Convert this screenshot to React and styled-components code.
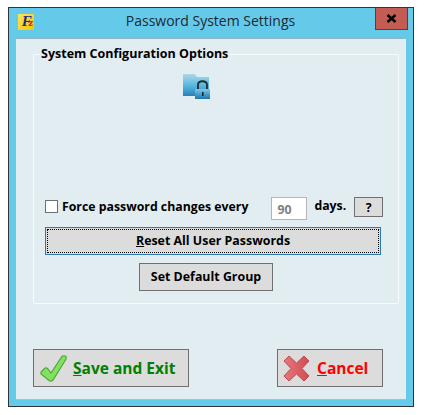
import React from 'react';
import styled, { createGlobalStyle } from 'styled-components';

const Global = createGlobalStyle`
    html, body {
        margin: 0;
        padding: 0;
        background: #ffffff;
    }
    body {
        font-family: "Open Sans", "Liberation Sans", sans-serif;
        color: #000000;
    }
`;

const Page = styled.div`
    width: 425px;
    height: 415px;
    padding: 7px 0 0 8px;
    box-sizing: border-box;
`;

const Window = styled.div`
    width: 406px;
    height: 400px;
    box-sizing: border-box;
    border: 1px solid #303438;
    background: #65c9ea;
    padding: 0 7px 6px 7px;
    display: flex;
    flex-direction: column;
`;

const TitleBar = styled.div`
    height: 30px;
    flex: none;
    display: flex;
    align-items: flex-start;
`;

const AppIcon = styled.div`
    width: 16px;
    height: 16px;
    margin: 6px 0 0 2px;
    flex: none;
    background: linear-gradient(135deg, #ffe45a, #f4c400);
    font-family: "Liberation Serif", serif;
    font-style: italic;
    font-weight: bold;
    font-size: 15px;
    line-height: 14px;
    color: #1d2c86;
    text-align: center;
    letter-spacing: -3px;

    span {
        color: #b3243a;
        font-size: 11px;
    }
`;

const Title = styled.div`
    flex: 1;
    text-align: center;
    font-size: 14px;
    line-height: 20px;
    margin-top: 3px;
    padding-left: 12px;
    color: #1c2a33;
`;

const CloseButton = styled.div`
    width: 33px;
    height: 22px;
    flex: none;
    margin-right: -2px;
    box-sizing: border-box;
    background: #c35c52;
    border: 1px solid #54403e;
    border-top: none;
    display: flex;
    align-items: center;
    justify-content: center;
`;

const Content = styled.div`
    flex: 1;
    background: #e2edf2;
    border-top: 1px solid #8fb4c6;
    border-bottom: 1px solid #8fc8de;
    padding: 7px 9px 0 17px;
`;

const GroupBox = styled.fieldset`
    margin: 0;
    width: 363px;
    height: 258px;
    box-sizing: border-box;
    border: 1px solid #f6fafc;
    border-radius: 2px;
    padding: 0 15px 0 11px;
    display: flex;
    flex-direction: column;
    align-items: flex-start;
`;

const GroupLegend = styled.legend`
    margin-left: -5px;
    padding: 0 1px;
    font-size: 12.5px;
    line-height: 16px;
    font-weight: 700;
    color: #000000;
`;

const FolderSlot = styled.div`
    margin: 11px 0 0 138px;
    height: 28px;
`;

const OptionRow = styled.div`
    display: flex;
    align-items: flex-start;
    margin-top: 96px;
    width: 338px;
    height: 23px;
`;

const CheckBox = styled.span`
    width: 13px;
    height: 13px;
    margin-top: 3px;
    flex: none;
    box-sizing: border-box;
    background: #ffffff;
    border: 1px solid #707070;
`;

const OptionLabel = styled.span`
    font-size: 12.3px;
    font-weight: 700;
    line-height: 18px;
    margin-top: ${(p) => p.$top}px;
    margin-left: ${(p) => p.$left}px;
    white-space: nowrap;
`;

const DaysInput = styled.div`
    width: 36px;
    height: 23px;
    flex: none;
    margin-left: 23px;
    box-sizing: border-box;
    background: #ffffff;
    border: 1px solid #b4b4b4;
    color: #808080;
    font-size: 12.3px;
    font-weight: 700;
    line-height: 23px;
    padding-left: 5px;
`;

const Button = styled.div`
    box-sizing: border-box;
    background: #dcdcdc;
    border: 1px solid #707070;
    display: flex;
    align-items: center;
    justify-content: center;
    font-weight: 700;
    white-space: nowrap;
`;

const HelpButton = styled(Button)`
    width: 30px;
    height: 20px;
    margin-left: 8px;
    font-size: 12.3px;
`;

const ResetButton = styled(Button)`
    width: 336px;
    height: 28px;
    margin: 7px 0 0 0;
    padding-bottom: 2px;
    font-size: 12.4px;
    border-color: #2f79b0;
    outline: 1px dotted #000000;
    outline-offset: -3px;
`;

const GroupButton = styled(Button)`
    width: 134px;
    height: 28px;
    margin: 8px 0 0 94px;
    padding-bottom: 2px;
    font-size: 12.4px;
`;

const Footer = styled.div`
    display: flex;
    justify-content: space-between;
    width: 350px;
    margin-top: 45px;
`;

const ActionButton = styled(Button)`
    width: ${(p) => p.$width}px;
    height: 38px;
    font-size: 15.5px;
    justify-content: flex-start;
    padding-left: 5px;
    gap: ${(p) => p.$gap}px;
    color: ${(p) => p.$color};
`;

const Key = styled.span`
    text-decoration: underline;
`;

const CloseGlyph = () => (
    <svg width="11" height="9" viewBox="0 0 11 9">
        <path d="M1.5 1 L9.5 8 M9.5 1 L1.5 8" stroke="#000" strokeWidth="2.4" fill="none" />
    </svg>
);

const FolderLock = () => (
    <svg width="28" height="27" viewBox="0 0 28 27">
        <defs>
            <linearGradient id="fld" x1="0" y1="0" x2="0" y2="1">
                <stop offset="0" stopColor="#a6dcf0" />
                <stop offset="0.55" stopColor="#55b4dd" />
                <stop offset="1" stopColor="#2a80b4" />
            </linearGradient>
            <linearGradient id="lck" x1="0" y1="0" x2="0" y2="1">
                <stop offset="0" stopColor="#7cc8e8" />
                <stop offset="1" stopColor="#1f76ab" />
            </linearGradient>
        </defs>
        <path d="M0 1 H12 L14 4 H26 V23 H0 Z" fill="url(#fld)" />
        <rect x="2" y="2.500" width="10" height="1.5" fill="#b9c6cc" />
        <path d="M15 16 V12 C15 7 24 7 24 12 V16" fill="none" stroke="#222c33" strokeWidth="1.8" />
        <rect x="12" y="16" width="15" height="10" fill="url(#lck)" />
        <rect x="19" y="19" width="1.5" height="4" fill="#10212c" />
    </svg>
);

const CheckIcon = () => (
    <svg width="28" height="29" viewBox="0 0 28 29">
        <path
            d="M3 17 L6 14 Q7.5 13.500 9 15 L12 19 L23 2.500 Q25 1 27 2.500 Q27.500 4.500 26.500 6 L14 26 Q12 28 10 26.500 L2 20 Q1.500 18 3 17 Z"
            fill="#84e060"
            stroke="#4da83c"
            strokeWidth="1.2"
        />
    </svg>
);

const CrossIcon = () => (
    <svg width="27" height="27" viewBox="0 0 27 27">
        <defs>
            <linearGradient id="crs" x1="0" y1="0" x2="1" y2="0">
                <stop offset="0" stopColor="#e8767a" />
                <stop offset="1" stopColor="#cf4d52" />
            </linearGradient>
        </defs>
        <path
            d="M1 6 L6 1 L13.500 8 L21 1 L26 6 L19 13.500 L26 21 L21 26 L13.500 19 L6 26 L1 21 L8 13.500 Z"
            fill="url(#crs)"
            stroke="#c04a50"
            strokeLinejoin="round"
        />
    </svg>
);

export default function App() {
    return (
        <Page>
            <Global />
            <Window>
                <TitleBar>
                    <AppIcon>F<span>z</span></AppIcon>
                    <Title>Password System Settings</Title>
                    <CloseButton><CloseGlyph /></CloseButton>
                </TitleBar>
                <Content>
                    <GroupBox>
                        <GroupLegend>System Configuration Options</GroupLegend>
                        <FolderSlot><FolderLock /></FolderSlot>
                        <OptionRow>
                            <CheckBox />
                            <OptionLabel $left={4} $top={1}>Force password changes every</OptionLabel>
                            <DaysInput>90</DaysInput>
                            <OptionLabel $left={7} $top={0}>days.</OptionLabel>
                            <HelpButton>?</HelpButton>
                        </OptionRow>
                        <ResetButton><span><Key>R</Key>eset All User Passwords</span></ResetButton>
                        <GroupButton>Set Default Group</GroupButton>
                    </GroupBox>
                    <Footer>
                        <ActionButton $width={156} $gap={6} $color="#008000">
                            <CheckIcon />
                            <span><Key>S</Key>ave and Exit</span>
                        </ActionButton>
                        <ActionButton $width={106} $gap={7} $color="#ff0000">
                            <CrossIcon />
                            <span><Key>C</Key>ancel</span>
                        </ActionButton>
                    </Footer>
                </Content>
            </Window>
        </Page>
    );
}
